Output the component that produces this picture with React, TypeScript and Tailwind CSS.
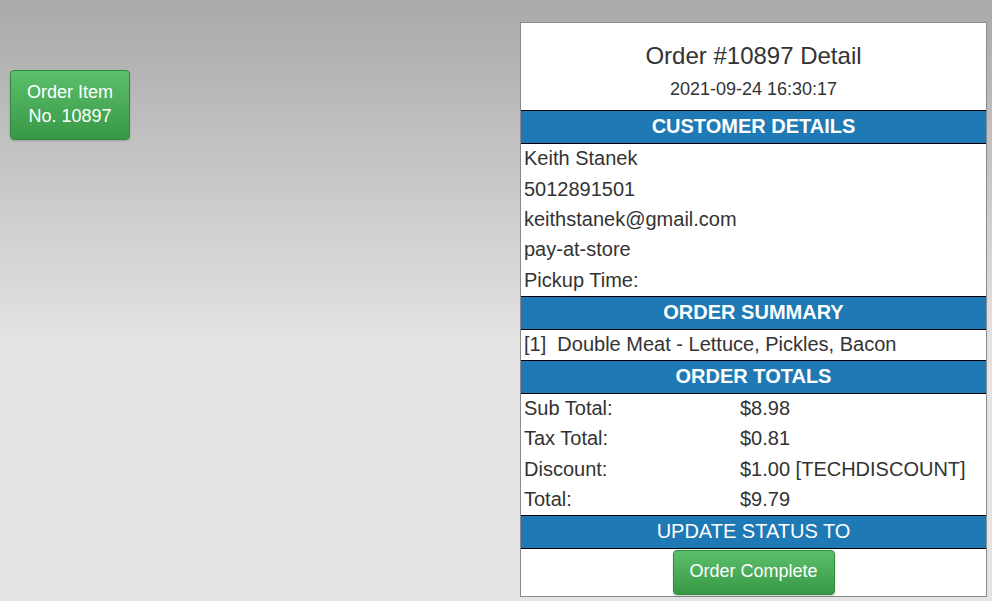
const font = "font-['Liberation_Sans',Arial,sans-serif]";

const SectionHeader = ({ title, bold = true }: { title: string; bold?: boolean }) => (
  <div
    className={`h-[34px] border-y border-black bg-[#1e79b4] text-center text-[20px] leading-[30px] text-white ${
      bold ? "font-bold" : "font-normal"
    }`}
  >
    {title}
  </div>
);

const customer = ["Keith Stanek", "5012891501", "keithstanek@gmail.com", "pay-at-store", "Pickup Time:"];

const totals = [
  ["Sub Total:", "$8.98"],
  ["Tax Total:", "$0.81"],
  ["Discount:", "$1.00 [TECHDISCOUNT]"],
  ["Total:", "$9.79"],
];

export default function App() {
  return (
    <div
      className={`${font} flex h-[601px] w-[992px] items-start overflow-hidden bg-[linear-gradient(to_bottom,#a9a9a9_0px,#e3e3e3_340px,#e4e4e4_100%)] text-[#333]`}
    >
      <div className="w-[520px] shrink-0 pl-[10px] pt-[70px]">
        <button className="h-[70px] w-[120px] rounded-[4px] border border-[#2f8a3d] bg-gradient-to-b from-[#5cbf6c] to-[#379946] pb-[2px] text-[18px] leading-[24px] text-white shadow-[0_1px_2px_rgba(0,0,0,0.2)]">
          Order Item
          <br />
          No. 10897
        </button>
      </div>

      <div className="mt-[22px] w-[467px] border border-[#8a8a8a] bg-white">
        <div className="flex h-[87px] flex-col items-center pt-[19px]">
          <div className="text-[24px] leading-[28px]">Order #10897 Detail</div>
          <div className="mt-[8px] text-[18px] leading-[22px]">2021-09-24 16:30:17</div>
        </div>

        <SectionHeader title="CUSTOMER DETAILS" />
        <div className="flex flex-col">
          {customer.map((c) => (
            <div key={c} className="flex h-[30.4px] items-center pb-[2px] pl-[3px] text-[20px]">
              {c}
            </div>
          ))}
        </div>

        <SectionHeader title="ORDER SUMMARY" />
        <div className="flex h-[30px] items-center whitespace-pre pb-[2px] pl-[3px] text-[20px]">
          {"[1]  Double Meat - Lettuce, Pickles, Bacon"}
        </div>

        <SectionHeader title="ORDER TOTALS" />
        <div className="flex flex-col">
          {totals.map(([label, value]) => (
            <div key={label} className="flex h-[30.25px] items-center pb-[2px] pl-[3px] text-[20px]">
              <div className="w-[216px] shrink-0">{label}</div>
              <div>{value}</div>
            </div>
          ))}
        </div>

        <SectionHeader title="UPDATE STATUS TO" bold={false} />
        <div className="flex h-[47px] justify-center pt-[1px]">
          <button className="h-[45px] w-[162px] rounded-[4px] border border-[#2f8a3d] bg-gradient-to-b from-[#5cbf6c] to-[#379946] pb-[2px] text-[18px] text-white shadow-[0_1px_2px_rgba(0,0,0,0.2)]">
            Order Complete
          </button>
        </div>
      </div>
    </div>
  );
}
